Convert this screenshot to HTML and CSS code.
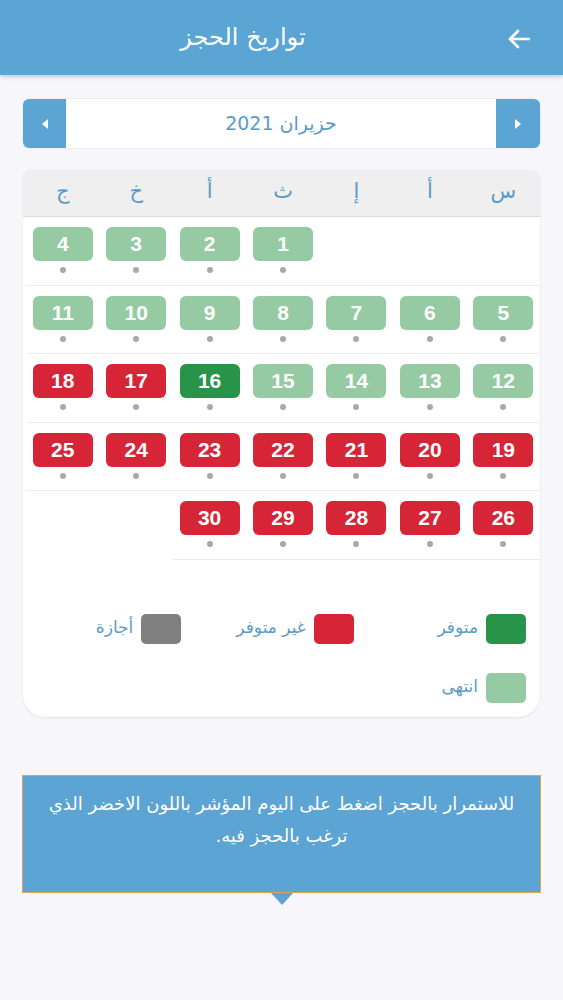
FILE: index.html
```html
<!DOCTYPE html>
<html lang="ar" dir="rtl">
<head>
<meta charset="utf-8">
<title>تواريخ الحجز</title>
<link rel="stylesheet" href="styles.css">
</head>
<body>
<header class="topbar">
  <div class="back">
    <svg width="22" height="20" viewBox="0 0 22 20"><path d="M21 10H2M10 2L2 10L10 18" fill="none" stroke="#fff" stroke-width="2.6" stroke-linecap="round" stroke-linejoin="round"/></svg>
  </div>
  <h1 class="title">تواريخ الحجز</h1>
</header>

<main class="content">
  <div class="month-nav">
    <div class="nav-btn nav-next"><span class="tri tri-right"></span></div>
    <div class="month-label">حزيران 2021</div>
    <div class="nav-btn nav-prev"><span class="tri tri-left"></span></div>
  </div>

  <section class="calendar">
    <div class="weekdays">
      <div>س</div><div>أ</div><div>إ</div><div>ث</div><div>أ</div><div>خ</div><div>ج</div>
    </div>
    <div class="days">
      <div class="cell empty"></div>
      <div class="cell empty"></div>
      <div class="cell empty"></div>
      <div class="cell"><span class="day done">1</span><i class="dot"></i></div>
      <div class="cell"><span class="day done">2</span><i class="dot"></i></div>
      <div class="cell"><span class="day done">3</span><i class="dot"></i></div>
      <div class="cell"><span class="day done">4</span><i class="dot"></i></div>

      <div class="cell"><span class="day done">5</span><i class="dot"></i></div>
      <div class="cell"><span class="day done">6</span><i class="dot"></i></div>
      <div class="cell"><span class="day done">7</span><i class="dot"></i></div>
      <div class="cell"><span class="day done">8</span><i class="dot"></i></div>
      <div class="cell"><span class="day done">9</span><i class="dot"></i></div>
      <div class="cell"><span class="day done">10</span><i class="dot"></i></div>
      <div class="cell"><span class="day done">11</span><i class="dot"></i></div>

      <div class="cell"><span class="day done">12</span><i class="dot"></i></div>
      <div class="cell"><span class="day done">13</span><i class="dot"></i></div>
      <div class="cell"><span class="day done">14</span><i class="dot"></i></div>
      <div class="cell"><span class="day done">15</span><i class="dot"></i></div>
      <div class="cell"><span class="day avail">16</span><i class="dot"></i></div>
      <div class="cell"><span class="day full">17</span><i class="dot"></i></div>
      <div class="cell"><span class="day full">18</span><i class="dot"></i></div>

      <div class="cell"><span class="day full">19</span><i class="dot"></i></div>
      <div class="cell"><span class="day full">20</span><i class="dot"></i></div>
      <div class="cell"><span class="day full">21</span><i class="dot"></i></div>
      <div class="cell"><span class="day full">22</span><i class="dot"></i></div>
      <div class="cell"><span class="day full">23</span><i class="dot"></i></div>
      <div class="cell"><span class="day full">24</span><i class="dot"></i></div>
      <div class="cell"><span class="day full">25</span><i class="dot"></i></div>

      <div class="cell"><span class="day full">26</span><i class="dot"></i></div>
      <div class="cell"><span class="day full">27</span><i class="dot"></i></div>
      <div class="cell"><span class="day full">28</span><i class="dot"></i></div>
      <div class="cell"><span class="day full">29</span><i class="dot"></i></div>
      <div class="cell"><span class="day full">30</span><i class="dot"></i></div>
    </div>

    <div class="legend">
      <div class="legend-item"><span class="swatch sw-avail"></span><span>متوفر</span></div>
      <div class="legend-item"><span class="swatch sw-full"></span><span>غير متوفر</span></div>
      <div class="legend-item"><span class="swatch sw-off"></span><span>أجازة</span></div>
      <div class="legend-item"><span class="swatch sw-done"></span><span>انتهى</span></div>
    </div>
  </section>

  <div class="info">
    <p>للاستمرار بالحجز اضغط على اليوم المؤشر باللون الاخضر الذي ترغب بالحجز فيه.</p>
  </div>
</main>
</body>
</html>
```

FILE: styles.css
```css
* { box-sizing: border-box; }
html, body { margin: 0; padding: 0; }
body {
  background: #f7f6fb;
  font-family: "DejaVu Sans", "Noto Sans", sans-serif;
  width: 563px;
  min-height: 1000px;
}
.topbar {
  height: 75px;
  background: #5aa5d4;
  display: flex;
  align-items: center;
  box-shadow: 0 2px 4px rgba(0,0,0,0.18);
}
.back {
  width: 77px;
  height: 75px;
  display: flex;
  align-items: center;
  justify-content: flex-start;
  padding-right: 33px;
  padding-top: 2px;
}
.title {
  flex: 1;
  margin: 0;
  text-align: center;
  color: #fff;
  font-weight: normal;
  font-size: 24px;
  padding-bottom: 2px;
}
.content {
  padding: 24px 23px 0 23px;
}
.month-nav {
  height: 49px;
  display: flex;
  background: #fff;
  border-radius: 6px;
  box-shadow: 0 0 2px rgba(0,0,0,0.12);
}
.nav-btn {
  width: 44px;
  background: #5aa5d4;
  display: flex;
  align-items: center;
  justify-content: center;
}
.nav-next { border-radius: 0 6px 6px 0; }
.nav-prev { border-radius: 6px 0 0 6px; width: 43px; }
.tri { width: 0; height: 0; border-top: 5px solid transparent; border-bottom: 5px solid transparent; }
.tri-right { border-left: 6px solid #fff; }
.tri-left { border-right: 6px solid #fff; }
.month-label {
  flex: 1;
  display: flex;
  align-items: center;
  justify-content: center;
  color: #5a9cc6;
  font-size: 19px;
  padding-bottom: 2px;
}
.calendar {
  margin-top: 22px;
  background: #fff;
  border-radius: 8px 8px 22px 22px;
  box-shadow: 0 1px 3px rgba(0,0,0,0.08);
  overflow: hidden;
}
.weekdays {
  display: grid;
  grid-template-columns: repeat(7, 1fr);
  height: 47px;
  background: #efefef;
  border-bottom: 1px solid #dcdcdc;
  padding-left: 3px;
}
.weekdays div {
  display: flex;
  align-items: center;
  justify-content: center;
  color: #5a9cc6;
  font-size: 21px;
  padding-bottom: 4px;
}
.days {
  display: grid;
  grid-template-columns: repeat(7, 1fr);
  padding-left: 3px;
}
.cell {
  height: 68.5px;
  border-bottom: 1px solid #ececec;
  display: flex;
  flex-direction: column;
  align-items: center;
  padding-top: 10px;
}
.day {
  width: 60px;
  height: 34px;
  border-radius: 6px;
  display: flex;
  align-items: center;
  justify-content: center;
  color: #fff;
  font-family: "Liberation Sans", Arial, sans-serif;
  font-weight: bold;
  font-size: 21px;
}
.done { background: #95caa3; }
.avail { background: #27944a; }
.full { background: #d52537; }
.dot {
  display: block;
  width: 6px;
  height: 6px;
  border-radius: 50%;
  background: #a9a9a9;
  margin-top: 6px;
}
.legend {
  display: grid;
  grid-template-columns: repeat(3, 1fr);
  row-gap: 29px;
  padding: 54px 0 14px 0;
}
.legend-item {
  display: flex;
  align-items: center;
  gap: 8px;
  padding-right: 14px;
  color: #5a9cc6;
  font-size: 17px;
}
.legend-item span:last-child { padding-bottom: 3px; }
.swatch {
  width: 40px;
  height: 30px;
  border-radius: 5px;
  flex: none;
}
.sw-avail { background: #27944a; }
.sw-full { background: #d52537; }
.sw-off { background: #808080; }
.sw-done { background: #95caa3; }
.info {
  position: relative;
  margin: 58px -1px 0 -1px;
  height: 118px;
  background: #5ba4d3;
  border: 1.5px solid #dea455;
  padding: 12px 18px 0 18px;
}
.info p {
  margin: 0;
  color: #fff;
  text-align: center;
  font-size: 18px;
  line-height: 32px;
}
.info::after {
  content: "";
  position: absolute;
  left: 50%;
  bottom: -13px;
  margin-left: -11px;
  width: 0;
  height: 0;
  border-left: 11px solid transparent;
  border-right: 11px solid transparent;
  border-top: 12px solid #5ba4d3;
}
```
